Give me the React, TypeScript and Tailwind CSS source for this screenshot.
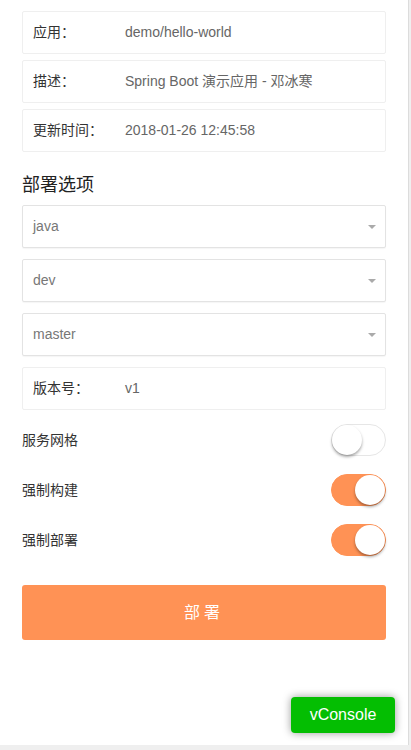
import { useState } from "react";

const font = { fontFamily: '"Liberation Sans", Arial, "Noto Sans CJK SC", sans-serif' };

function InfoRow({ label, value }: { label: string; value: string }) {
  return (
    <div className="flex h-[43px] items-center rounded-[2px] border border-[#efefef] bg-white px-[10px] text-[14px]">
      <span className="w-[92px] shrink-0 text-[#333]">{label}</span>
      <span className="text-[#666]">{value}</span>
    </div>
  );
}

function SelectBox({ value }: { value: string }) {
  return (
    <div className="flex h-[43px] items-center justify-between rounded-[2px] border border-[#e3e3e3] bg-white pl-[10px] pr-[9px] text-[14px] text-[#777] shadow-[0_1px_1px_rgba(0,0,0,0.04)]">
      <span>{value}</span>
      <span className="h-0 w-0 border-x-[4px] border-t-[4px] border-x-transparent border-t-[#aaa]" />
    </div>
  );
}

function Toggle({ on, onClick }: { on: boolean; onClick: () => void }) {
  return (
    <button
      onClick={onClick}
      className={`relative h-[32px] w-[55px] rounded-full border ${
        on ? "border-[#ff9255] bg-[#ff9255]" : "border-[#e6e6e6] bg-white"
      }`}
    >
      <span
        className={`absolute top-0 h-[30px] w-[30px] rounded-full bg-white shadow-[0_2px_3px_rgba(0,0,0,0.35)] ${
          on ? "right-0" : "left-0"
        }`}
      />
    </button>
  );
}

export default function App() {
  const [mesh, setMesh] = useState(false);
  const [build, setBuild] = useState(true);
  const [deploy, setDeploy] = useState(true);

  const toggles = [
    { label: "服务网格", on: mesh, set: () => setMesh(!mesh) },
    { label: "强制构建", on: build, set: () => setBuild(!build) },
    { label: "强制部署", on: deploy, set: () => setDeploy(!deploy) },
  ];

  return (
    <div className="h-[750px] w-[411px] overflow-hidden bg-[#efefef]" style={font}>
      <div className="relative h-[745px] w-[409px] border-r border-[#dcdcdc] bg-white">
        <div className="flex flex-col px-[22px] pt-[11px]">
          <div className="flex flex-col gap-[6px]">
            <InfoRow label="应用：" value="demo/hello-world" />
            <InfoRow label="描述：" value="Spring Boot 演示应用 - 邓冰寒" />
            <InfoRow label="更新时间：" value="2018-01-26 12:45:58" />
          </div>

          <h2 className="mt-[21px] text-[18px] leading-[24px] text-[#222]">部署选项</h2>

          <div className="mt-[8px] flex flex-col gap-[11px]">
            <SelectBox value="java" />
            <SelectBox value="dev" />
            <SelectBox value="master" />
            <InfoRow label="版本号：" value="v1" />
          </div>

          <div className="mt-[14px] flex flex-col gap-[18px]">
            {toggles.map((t) => (
              <div key={t.label} className="flex items-center justify-between">
                <span className="text-[14px] text-[#333]">{t.label}</span>
                <Toggle on={t.on} onClick={t.set} />
              </div>
            ))}
          </div>

          <button className="mt-[29px] h-[55px] rounded-[3px] bg-[#ff9255] text-[16px] tracking-[4px] text-white">
            部署
          </button>
        </div>

        <button className="absolute right-[13px] top-[697px] flex h-[36px] w-[104px] items-center justify-center rounded-[4px] bg-[#04be02] text-[16px] text-white shadow-[0_0_8px_rgba(0,0,0,0.4)]">
          vConsole
        </button>
      </div>
    </div>
  );
}
